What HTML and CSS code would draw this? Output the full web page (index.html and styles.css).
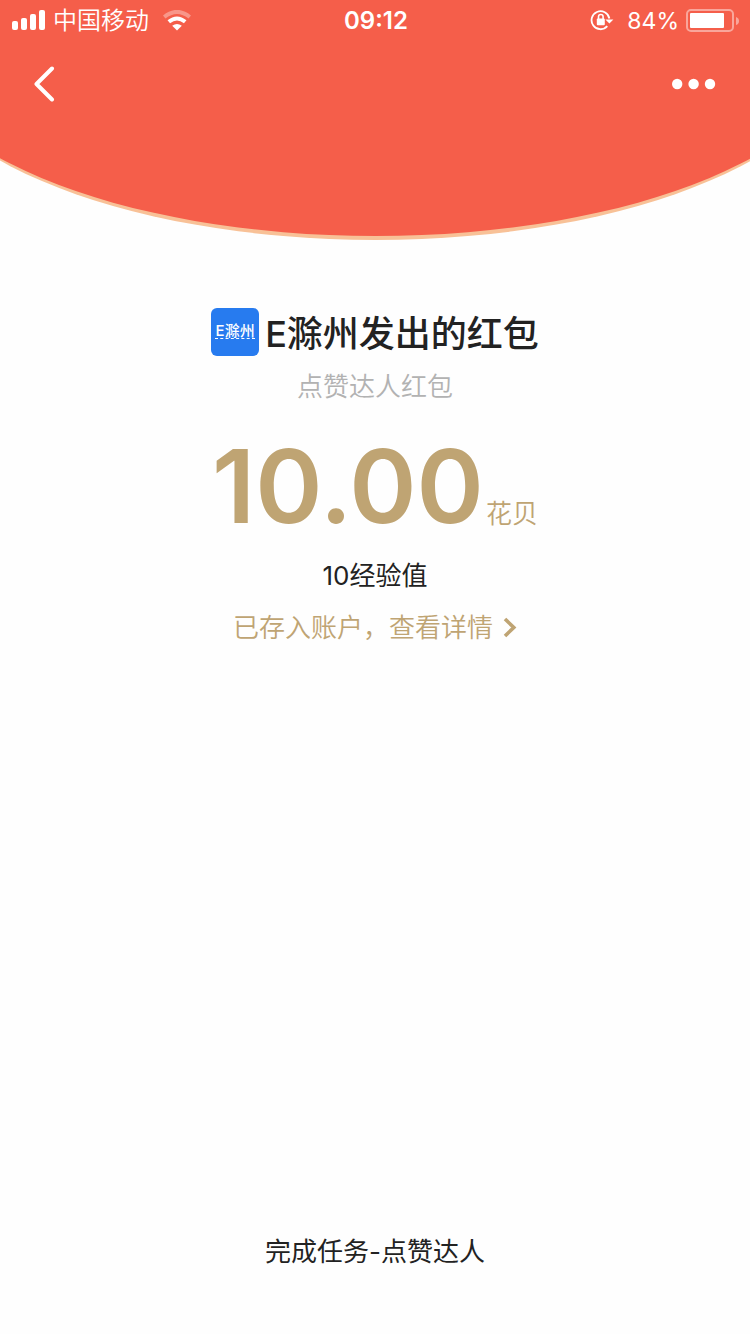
FILE: index.html
```
<!DOCTYPE html>
<html lang="zh-CN">
<head>
    <meta charset="utf-8"/>
    <meta name="viewport" content="width=device-width, initial-scale=1">
    <title>红包详情</title>
    <link rel="stylesheet" href="styles.css">
</head>
<body>

<header class="header">
    <div class="status">
        <div class="status-left">
            <svg width="34" height="22" viewBox="0 0 34 22" fill="#fff">
                <rect x="0" y="11" width="6" height="9" rx="2"/>
                <rect x="9" y="8" width="6" height="12" rx="2"/>
                <rect x="18" y="4" width="6" height="16" rx="2"/>
                <rect x="27" y="0" width="6" height="20" rx="2"/>
            </svg>
            <span class="carrier">中国移动</span>
            <svg width="28" height="22" viewBox="0 0 28 22" fill="none" stroke="#fff" stroke-width="4">
                <path d="M1.200 7Q14-3.200 26.800 7" opacity=".35"/>
                <path d="M5.800 11.800Q14 5.200 22.200 11.800"/>
                <path d="M9.200 15.800Q14 12 18.800 15.800L14 20.400Z" fill="#fff" stroke="none"/>
            </svg>
        </div>
        <span class="time">09:12</span>
        <div class="status-right">
            <!-- 竖屏锁定 -->
            <svg width="24" height="24" viewBox="0 0 24 24" fill="none" stroke="#fff" stroke-width="1.8">
                <path d="M17.300 17.200A9 9 0 1 1 19.400 9.500"/>
                <path d="M15.400 10.400H23.400L19.400 14.600Z" fill="#fff" stroke="none"/>
                <rect x="6.800" y="9.500" width="8" height="6.800" rx="1" fill="#fff" stroke="none"/>
                <path d="M8.500 10V7.800a2.300 2.300 0 0 1 4.600 0v2.200" stroke-width="1.600"/>
            </svg>
            <span class="percent">84%</span>
            <svg width="54" height="24" viewBox="0 0 54 24">
                <rect x="1" y="1" width="46" height="21" rx="4" fill="none" stroke="#fff" stroke-width="2" opacity=".45"/>
                <rect x="4" y="4" width="34" height="15" rx="1" fill="#fff"/>
                <path d="M50 8q3 1 3 4t-3 4z" fill="#fff" opacity=".45"/>
            </svg>
        </div>
    </div>
    <nav class="nav">
        <button class="nav-btn" type="button" aria-label="返回">
            <svg width="22" height="36" viewBox="0 0 22 36" fill="none" stroke="#fff" stroke-width="4" stroke-linecap="round" stroke-linejoin="round">
                <path d="M18 2.500L2.500 18L18 33.500"/>
            </svg>
        </button>
        <button class="nav-btn" type="button" aria-label="更多">
            <svg width="44" height="12" viewBox="0 0 44 12" fill="#fff">
                <circle cx="5.200" cy="6" r="5.200"/>
                <circle cx="21.600" cy="6" r="5.200"/>
                <circle cx="38" cy="6" r="5.200"/>
            </svg>
        </button>
    </nav>
</header>

<main class="main">
    <h1 class="sender">
        <span class="logo">E滁州</span>
        <span class="sender-name">E滁州发出的红包</span>
    </h1>
    <p class="remark">点赞达人红包</p>
    <p class="amount">10.00<span class="unit">花贝</span></p>
    <p class="exp">10经验值</p>
    <a class="detail" href="#">已存入账户，查看详情
        <svg width="14" height="22" viewBox="0 0 14 22" fill="none" stroke="#bfa473" stroke-width="3.600">
            <path d="M2 2L10.800 10.500L2 19"/>
        </svg>
    </a>
</main>

<footer class="footer">完成任务-点赞达人</footer>

</body>
</html>
```
FILE: styles.css
```
* {
    box-sizing: border-box;
    margin: 0;
    padding: 0;
}

body {
    display: flex;
    flex-direction: column;
    min-height: 100vh;
    background: #fefefe;
    color: #222;
    font-family: Inter, 'Noto Sans CJK SC', sans-serif;
    font-size: 26px;
    line-height: 40px;
}

svg {
    display: block;
    flex: none;
}

/* 顶部弧形 */
.header {
    position: relative;
    height: 240px;
    overflow: hidden;
    color: #fff;
}

.header::before {
    content: '';
    position: absolute;
    z-index: -1;
    left: -13%;
    right: -13%;
    bottom: 0;
    height: 400px;
    background: #f55e4a;
    border-bottom: 4px solid #f8c197;
    border-radius: 50%;
}

.status {
    display: grid;
    grid-template-columns: 1fr auto 1fr;
    align-items: center;
    height: 42px;
    padding: 0 10px 0 12px;
}

.status-left,
.status-right {
    display: flex;
    align-items: center;
}

.status-right {
    justify-content: flex-end;
}

.carrier {
    margin: 0 14px 0 7px;
    font-size: 24px;
    font-weight: 350;
}

.time {
    font-size: 24px;
    font-weight: 600;
}

.percent {
    margin: 0 7px 0 13px;
    font-size: 23px;
}

.nav {
    display: flex;
    justify-content: space-between;
    align-items: center;
    height: 84px;
    padding: 0 34px;
}

.nav-btn {
    border: 0;
    background: none;
    cursor: pointer;
}

.main {
    display: flex;
    flex-direction: column;
    align-items: center;
    padding-top: 66px;
}

.sender {
    display: flex;
    align-items: center;
    gap: 6px;
    height: 52px;
    font-size: 36px;
    font-weight: 500;
}

.sender-name {
    padding-top: 3px;
}

.logo {
    display: flex;
    flex-direction: column;
    align-items: center;
    width: 48px;
    height: 48px;
    padding-top: 15px;
    border-radius: 6px;
    background: #277bef;
    color: #fff;
    font-size: 15px;
    line-height: 15px;
}

/* 图标文字下的虚线 */
.logo::after {
    content: '';
    width: 40px;
    border-bottom: 1px dashed #fff;
}

.remark {
    margin-top: 9px;
    color: #b2b2b2;
    font-weight: 350;
}

.amount {
    margin-top: 19px;
    color: #bfa473;
    font-size: 102px;
    font-weight: 600;
    line-height: 120px;
}

.unit {
    margin-left: 2px;
    font-size: 26px;
    font-weight: 350;
    line-height: 40px;
}

.exp {
    margin-top: 10px;
}

.detail {
    display: flex;
    align-items: center;
    gap: 10px;
    margin-top: 12px;
    color: #bfa473;
    font-weight: 350;
    text-decoration: none;
}

.footer {
    margin-top: auto;
    padding: 24px 0 62px;
    text-align: center;
}
```
